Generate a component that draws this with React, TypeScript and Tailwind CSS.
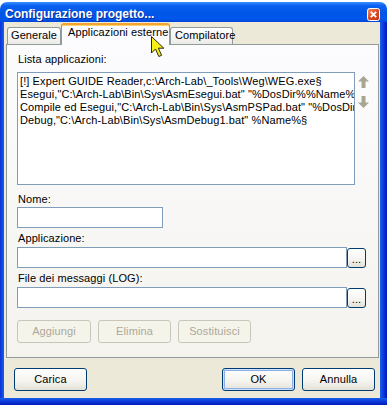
import React from 'react';

const appLines = [
  '[!] Expert GUIDE Reader,c:\\Arch-Lab\\_Tools\\Weg\\WEG.exe§',
  'Esegui,"C:\\Arch-Lab\\Bin\\Sys\\AsmEsegui.bat" "%DosDir%%Name%"§',
  'Compile ed Esegui,"C:\\Arch-Lab\\Bin\\Sys\\AsmPSPad.bat" "%DosDir%%Name%"§',
  'Debug,"C:\\Arch-Lab\\Bin\\Sys\\AsmDebug1.bat" %Name%§',
];

function XpButton({
  label,
  className = '',
  disabled = false,
  isDefault = false,
}: {
  label: string;
  className?: string;
  disabled?: boolean;
  isDefault?: boolean;
}) {
  if (disabled) {
    return (
      <div
        className={`h-[23px] flex items-center justify-center rounded-[3px] border border-[#C9C7BA] bg-[#F5F4EA] text-[#ACA899] ${className}`}
      >
        {label}
      </div>
    );
  }
  return (
    <div
      className={`h-[23px] flex items-center justify-center rounded-[3px] border border-[#003C74] bg-[linear-gradient(180deg,#FFFFFF_0%,#F4F3EE_60%,#E3E1D6_100%)] text-black ${
        isDefault ? 'shadow-[inset_0_0_0_1px_#CEE0FB,inset_0_0_0_2px_#8EAEE8]' : ''
      } ${className}`}
    >
      {label}
    </div>
  );
}

function BrowseButton() {
  return (
    <div className="mt-[1px] w-[19px] h-[20px] rounded-[3px] border border-[#003C74] bg-[linear-gradient(180deg,#FFFFFF_0%,#F4F3EE_60%,#E3E1D6_100%)] flex items-end justify-center pb-[2px] text-[11px] leading-[11px]">
      ...
    </div>
  );
}

function Arrow({ down = false }: { down?: boolean }) {
  return (
    <svg width="11" height="12" viewBox="0 0 11 12" className={down ? 'rotate-180' : ''}>
      <polygon points="5.5,0 11,5.5 7.5,5.5 7.5,12 3.5,12 3.5,5.5 0,5.5" fill="#A8A592" />
    </svg>
  );
}

export default function App() {
  return (
    <div className="w-[387px] h-[405px] bg-white overflow-hidden relative font-['Liberation_Sans',Arial,sans-serif] text-[11px] leading-[13px] tracking-[0.1px] text-black">
      <div className="mt-[2px] h-[403px] flex flex-col">
        {/* Title bar */}
        <div className="h-[20px] flex items-start rounded-t-[7px] bg-[linear-gradient(180deg,#3D8EFF_0%,#0A62F2_18%,#0055E6_55%,#0057EC_85%,#0046D6_100%)] pl-[5px] pr-[7px]">
          <span className="pt-[5px] text-[12px] leading-[14px] font-bold text-white tracking-normal [text-shadow:1px_1px_#0A2A9C]">
            Configurazione progetto...
          </span>
          <svg width="13" height="13" viewBox="0 0 13 13" className="ml-auto mt-[6px]">
            <defs>
              <linearGradient id="cls" x1="0" y1="0" x2="1" y2="1">
                <stop offset="0" stopColor="#F0936F" />
                <stop offset="0.5" stopColor="#DD4A22" />
                <stop offset="1" stopColor="#C03A10" />
              </linearGradient>
            </defs>
            <rect x="0.5" y="0.5" width="12" height="12" rx="2" fill="url(#cls)" stroke="#FFFFFF" />
            <path d="M3.8 3.8 L9.2 9.2 M9.2 3.8 L3.8 9.2" stroke="#FFFFFF" strokeWidth="1.8" />
          </svg>
        </div>

        <div className="flex flex-1">
          <div className="w-[4px] bg-[linear-gradient(90deg,#0831D9,#1A5FE8)]" />

          {/* Client area */}
          <div className="flex-1 flex flex-col bg-[#ECE9D8]">
            {/* Tabs */}
            <div className="h-[22px] flex items-end pl-[3px] relative z-10">
              <div className="w-[54px] h-[17px] border-t border-l border-r border-[#919B9C] rounded-t-[3px] bg-[linear-gradient(180deg,#FFFFFF,#ECEBE6)] pl-[3px] pt-[1px]">
                Generale
              </div>
              <div className="w-[109px] h-[22px] -mb-px border-l border-r border-[#919B9C] border-t-2 border-t-[#F1A431] rounded-t-[3px] bg-[#FCFCFE] shadow-[inset_0_1px_0_#FFD36A] pl-[6px] pt-[1px]">
                Applicazioni esterne
              </div>
              <div className="w-[63px] h-[17px] border-t border-l border-r border-[#919B9C] rounded-t-[3px] bg-[linear-gradient(180deg,#FFFFFF,#ECEBE6)] pl-[4px] pt-[1px]">
                Compilatore
              </div>
            </div>

            {/* Panel */}
            <div className="ml-[2px] mr-[1px] border border-[#919B9C] bg-[linear-gradient(180deg,#FCFCFE,#F4F3EE)] pl-[10px] pt-[8px] pb-[14px] flex flex-col">
              <div className="ml-[1px]">Lista applicazioni:</div>
              <div className="mt-[6px] flex">
                <div className="w-[338px] h-[113px] border border-[#7F9DB9] bg-white pl-[2px] pt-[2px] overflow-hidden">
                  {appLines.map((l) => (
                    <div key={l} className="whitespace-nowrap">
                      {l}
                    </div>
                  ))}
                </div>
                <div className="ml-[3px] pt-[4px] flex flex-col gap-[8px]">
                  <Arrow />
                  <Arrow down />
                </div>
              </div>

              <div className="mt-[8px] ml-[1px]">Nome:</div>
              <div className="mt-[1px] w-[146px] h-[21px] border border-[#7F9DB9] bg-white" />

              <div className="mt-[4px] ml-[1px]">Applicazione:</div>
              <div className="mt-[2px] flex items-start">
                <div className="w-[330px] h-[21px] border border-[#7F9DB9] bg-white" />
                <BrowseButton />
              </div>

              <div className="mt-[4px] ml-[1px]">File dei messaggi (LOG):</div>
              <div className="mt-[2px] flex items-start">
                <div className="w-[330px] h-[21px] border border-[#7F9DB9] bg-white" />
                <BrowseButton />
              </div>

              <div className="mt-[12px] flex gap-[7px]">
                <XpButton label="Aggiungi" disabled className="w-[74px]" />
                <XpButton label="Elimina" disabled className="w-[73px]" />
                <XpButton label="Sostituisci" disabled className="w-[73px]" />
              </div>
            </div>

            {/* Bottom buttons */}
            <div className="mt-[10px] flex pl-[10px] pr-[5px]">
              <XpButton label="Carica" className="w-[73px]" />
              <XpButton label="OK" isDefault className="w-[73px] ml-auto" />
              <XpButton label="Annulla" className="w-[73px] ml-[7px]" />
            </div>
          </div>

          <div className="w-[7px] bg-[linear-gradient(90deg,#1A5FE8,#0831D9_60%,#0019B0)]" />
        </div>
        <div className="h-[7px] bg-[linear-gradient(180deg,#1A5FE8,#0831D9_60%,#0019B0)]" />
      </div>

      {/* Mouse cursor */}
      <svg width="14" height="22" viewBox="0 0 14 22" className="absolute left-[151px] top-[36px] z-20">
        <path
          d="M0.5 0.5 L0.5 17 L4.5 13 L7.8 20.5 L10.6 19.3 L7.4 12.2 L12.8 12.2 Z"
          fill="#F6EE1A"
          stroke="#2A2A10"
          strokeWidth="1"
          strokeLinejoin="round"
        />
      </svg>
    </div>
  );
}
